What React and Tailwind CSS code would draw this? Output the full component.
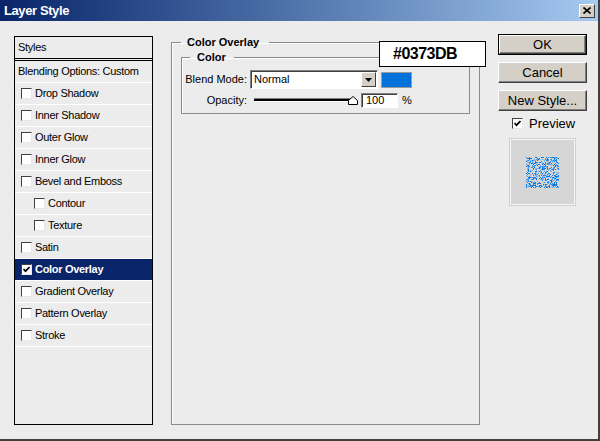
import React from 'react';

const layers = [
  ['Drop Shadow', false],
  ['Inner Shadow', false],
  ['Outer Glow', false],
  ['Inner Glow', false],
  ['Bevel and Emboss', false],
  ['Contour', true],
  ['Texture', true],
  ['Satin', false],
  ['Color Overlay', false, true],
  ['Gradient Overlay', false],
  ['Pattern Overlay', false],
  ['Stroke', false],
];

// seeded noise for the little preview swatch
function makeNoise() {
  let s = 1337;
  const rnd = () => {
    s |= 0; s = (s + 0x6d2b79f5) | 0;
    let t = Math.imul(s ^ (s >>> 15), 1 | s);
    t = (t + Math.imul(t ^ (t >>> 7), 61 | t)) ^ t;
    return ((t ^ (t >>> 14)) >>> 0) / 4294967296;
  };
  const cols = ['#0373db', '#1a82e6', '#4b9cee', '#82b6e8'];
  const dots = [];
  for (let y = 0; y < 31; y++) {
    for (let x = 0; x < 33; x++) {
      if (rnd() < 0.45) dots.push({ x, y, c: cols[Math.floor(rnd() * cols.length)] });
    }
  }
  return dots;
}
const noise = makeNoise();

function Check({ on }) {
  return (
    <span className="w-[11px] h-[11px] shrink-0 bg-white border border-t-[#404040] border-l-[#404040] border-r-[#e8e8e8] border-b-[#e8e8e8] flex items-center justify-center">
      {on && (
        <svg width="7" height="7" viewBox="0 0 7 7">
          <polyline points="0.5,3 2.5,5.2 6.5,1" fill="none" stroke="#000" strokeWidth="1.7" />
        </svg>
      )}
    </span>
  );
}

function Button({ children, primary }) {
  const inner = (
    <div className="h-full bg-[#d4d0c8] border border-t-white border-l-white border-r-[#404040] border-b-[#404040] shadow-[inset_-1px_-1px_0_#808080] flex items-center justify-center text-[13px] text-black">
      {children}
    </div>
  );
  if (primary) {
    return <div className="w-[89px] h-[21px] border border-black">{inner}</div>;
  }
  return <div className="w-[89px] h-[21px]">{inner}</div>;
}

export default function App() {
  return (
    <div className="relative w-[600px] h-[441px] bg-[#ececec] border-r-2 border-b-2 border-[#404040] flex flex-col font-['Liberation_Sans',Arial,sans-serif] text-[11px] text-black overflow-hidden">
      {/* title bar */}
      <div className="h-[21px] shrink-0 bg-gradient-to-r from-[#0a246a] to-[#a6caf0] flex items-center justify-between pl-[4px] pr-[3px]">
        <span className="text-white font-bold text-[13px] tracking-[-0.4px]">Layer Style</span>
        <div className="w-[16px] h-[14px] bg-[#d4d0c8] border border-t-white border-l-white border-r-[#404040] border-b-[#404040] flex items-center justify-center">
          <svg width="8" height="7" viewBox="0 0 8 7">
            <path d="M0.5 0.5 L7.5 6.5 M7.5 0.5 L0.5 6.5" stroke="#000" strokeWidth="1.6" />
          </svg>
        </div>
      </div>

      <div className="flex-1 flex items-start pl-[14px]">
        {/* styles list */}
        <div className="mt-[15px] w-[139px] h-[389px] border border-black flex flex-col tracking-[-0.3px]">
          <div className="h-[24px] flex items-center pl-[3px] border-b-[3px] border-double border-black">Styles</div>
          <div className="h-[22px] flex items-center pl-[3px] border-b border-white">Blending Options: Custom</div>
          {layers.map(([name, nested, active]) => (
            <div
              key={name}
              className={
                'h-[22px] flex items-center gap-[2px] border-b border-white ' +
                (nested ? 'pl-[19px] ' : 'pl-[6px] ') +
                (active ? 'bg-[#0a246a] text-white font-bold' : '')
              }
            >
              <Check on={active} />
              <span className="ml-[1px]">{name}</span>
            </div>
          ))}
        </div>

        {/* color overlay group */}
        <fieldset className="mt-[15px] ml-[18px] w-[309px] h-[389px] border border-[#8a8a8a] shadow-[inset_1px_1px_0_#fff]">
          <legend className="ml-[9px] pl-[6px] pr-[10px] font-bold leading-[13px]">Color Overlay</legend>
          <fieldset className="mt-[2px] mx-[9px] h-[63px] border border-[#8a8a8a] shadow-[inset_1px_1px_0_#fff]">
            <legend className="ml-[8px] pl-[7px] pr-[8px] font-bold leading-[13px]">Color</legend>
            <div className="mt-[6px] flex items-center">
              <span className="w-[65px] text-right">Blend Mode:</span>
              <div className="ml-[3px] w-[128px] h-[19px] bg-white border border-t-[#808080] border-l-[#808080] border-r-white border-b-white shadow-[inset_1px_1px_0_#404040] flex items-center justify-between pl-[3px] pr-[1px]">
                <span className="text-[11px]">Normal</span>
                <div className="w-[15px] h-[15px] bg-[#d4d0c8] border border-t-white border-l-white border-r-[#404040] border-b-[#404040] flex items-center justify-center">
                  <svg width="7" height="4" viewBox="0 0 7 4">
                    <polygon points="0,0 7,0 3.5,4" fill="#000" />
                  </svg>
                </div>
              </div>
              <div className="ml-[3px] w-[31px] h-[16px] bg-[#0373db] border border-[#9a9a9a]" />
            </div>
            <div className="mt-[4px] flex items-center h-[14px]">
              <span className="w-[65px] text-right">Opacity:</span>
              <div className="relative ml-[7px] w-[104px] h-[14px] flex items-center">
                <div className="w-[98px] h-[4px] bg-black border-t border-[#808080] border-b border-b-white" />
                <svg className="absolute left-[94px] top-[3px]" width="10" height="9" viewBox="0 0 10 9">
                  <polygon points="0.5,4.5 5,0.5 9.5,4.5 9.5,8.5 0.5,8.5" fill="#fff" stroke="#000" strokeWidth="1" />
                </svg>
              </div>
              <div className="ml-[3px] w-[37px] h-[15px] bg-white border border-t-[#808080] border-l-[#808080] border-r-white border-b-white shadow-[inset_1px_1px_0_#404040] flex items-center pl-[4px]">
                100
              </div>
              <span className="ml-[4px]">%</span>
            </div>
          </fieldset>
        </fieldset>

        {/* buttons */}
        <div className="mt-[13px] ml-[18px] flex flex-col">
          <div className="flex flex-col gap-[7px]">
            <Button primary>OK</Button>
            <Button>Cancel</Button>
            <Button>New Style...</Button>
          </div>
          <div className="mt-[7px] flex items-center pl-[14px] h-[11px]">
            <Check on />
            <span className="ml-[6px] text-[13px]">Preview</span>
          </div>
          <div className="mt-[10px] ml-[12px] w-[65px] h-[66px] bg-[#d6d6d6] border border-[#f6f6f6] shadow-[0_0_0_1px_#cfcfcf] flex items-center justify-center">
            <svg width="33" height="31" viewBox="0 0 33 31" shapeRendering="crispEdges">
              {noise.map((d, i) => (
                <rect key={i} x={d.x} y={d.y} width="1" height="1" fill={d.c} />
              ))}
            </svg>
          </div>
        </div>
      </div>

      {/* hex annotation */}
      <div className="absolute left-[379px] top-[41px] w-[107px] h-[26px] bg-white border border-black flex items-center pl-[13px] text-[16px] font-bold tracking-[-0.5px]">
        #0373DB
      </div>
    </div>
  );
}
